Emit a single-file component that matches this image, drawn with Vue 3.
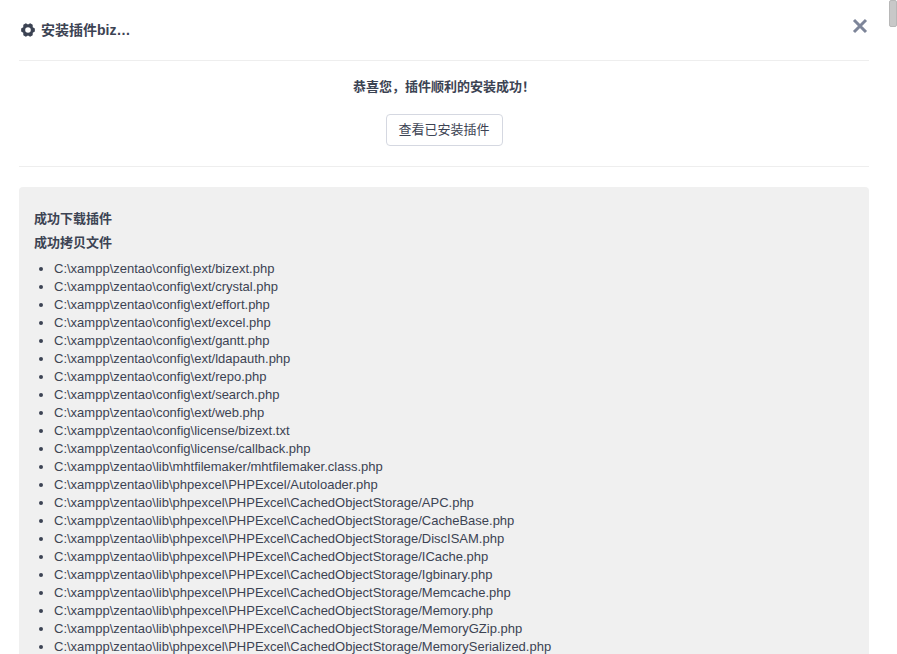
<script setup>
const root = 'C:\\xampp\\zentao\\'
const cache = 'lib\\phpexcel\\PHPExcel\\CachedObjectStorage/'
const files = [
  'config\\ext/bizext.php',
  'config\\ext/crystal.php',
  'config\\ext/effort.php',
  'config\\ext/excel.php',
  'config\\ext/gantt.php',
  'config\\ext/ldapauth.php',
  'config\\ext/repo.php',
  'config\\ext/search.php',
  'config\\ext/web.php',
  'config\\license/bizext.txt',
  'config\\license/callback.php',
  'lib\\mhtfilemaker/mhtfilemaker.class.php',
  'lib\\phpexcel\\PHPExcel/Autoloader.php',
  cache + 'APC.php',
  cache + 'CacheBase.php',
  cache + 'DiscISAM.php',
  cache + 'ICache.php',
  cache + 'Igbinary.php',
  cache + 'Memcache.php',
  cache + 'Memory.php',
  cache + 'MemoryGZip.php',
  cache + 'MemorySerialized.php',
].map(p => root + p)
</script>

<template>
  <div class="page">
    <div class="modal">
      <header class="head">
        <h1 class="title">
          <svg class="gear" viewBox="0 0 14 14" width="14" height="14" aria-hidden="true">
            <path fill="#3c4353" fill-rule="evenodd" d="M13.850 5.540L13.850 8.460 11.760 9.750 11.680 12.200 9.160 13.660 7 12.500 4.840 13.660 2.320 12.200 2.240 9.750 .15 8.460 .15 5.540 2.240 4.250 2.320 1.800 4.840 .34 7 1.500 9.160 .34 11.680 1.800 11.760 4.250zM7 4.200a2.800 2.800 0 1 0 0 5.600 2.800 2.800 0 0 0 0-5.600z"/>
          </svg>
          <span>安装插件biz…</span>
        </h1>
        <button class="close" aria-label="关闭">
          <svg viewBox="0 0 16 16" width="16" height="16"><path d="M2 2l12 12M14 2L2 14" stroke="#7d8599" stroke-width="3" fill="none"/></svg>
        </button>
      </header>
      <section class="result">
        <p class="msg">恭喜您，插件顺利的安装成功！</p>
        <button class="btn">查看已安装插件</button>
      </section>
      <section class="log">
        <div class="log-title">成功下载插件</div>
        <div class="log-title">成功拷贝文件</div>
        <ul class="files">
          <li v-for="f in files" :key="f">{{ f }}</li>
        </ul>
      </section>
    </div>
    <div class="thumb"></div>
  </div>
</template>

<style scoped>
.page {
  width: 897px;
  height: 654px;
  overflow: hidden;
  position: relative;
  background: #fff;
  font-family: "Liberation Sans", "Noto Sans CJK SC", sans-serif;
  font-size: 13px;
  line-height: 18px;
  color: #3c4353;
}
.modal {
  width: 850px;
  margin-left: 19px;
}
.head {
  height: 60px;
  border-bottom: 1px solid #eee;
  display: flex;
  justify-content: space-between;
  position: relative;
}
.title {
  margin: 21px 0 0 2px;
  font-size: 14px;
  font-weight: bold;
  line-height: 18px;
  display: flex;
  align-items: center;
  gap: 6px;
  height: 18px;
}
.close {
  position: absolute;
  right: 1px;
  top: 18px;
  padding: 0;
  border: 0;
  background: none;
  width: 16px;
  height: 16px;
  display: flex;
  align-items: center;
  justify-content: center;
}
.result {
  height: 105px;
  border-bottom: 1px solid #eee;
  text-align: center;
}
.msg {
  margin: 0;
  padding-top: 17px;
  font-weight: bold;
  height: 53px;
  box-sizing: border-box;
}
.btn {
  width: 117px;
  height: 32px;
  background: #fff;
  border: 1px solid #d5d8e1;
  border-radius: 4px;
  font: inherit;
  color: inherit;
  padding: 0;
}
.log {
  margin-top: 20px;
  background: #f0f0f0;
  border-radius: 4px;
  padding: 23px 15px 0;
  height: 600px;
}
.log-title {
  font-weight: bold;
  margin-bottom: 6px;
}
.files {
  margin: 8px 0 0;
  padding: 0 0 0 20px;
}
.thumb {
  position: absolute;
  left: 889px;
  top: 0;
  width: 8px;
  height: 27px;
  background: #c8c8c8;
  border-radius: 2px;
  border: 1px solid #b8b8b8;
  box-sizing: border-box;
}
</style>
